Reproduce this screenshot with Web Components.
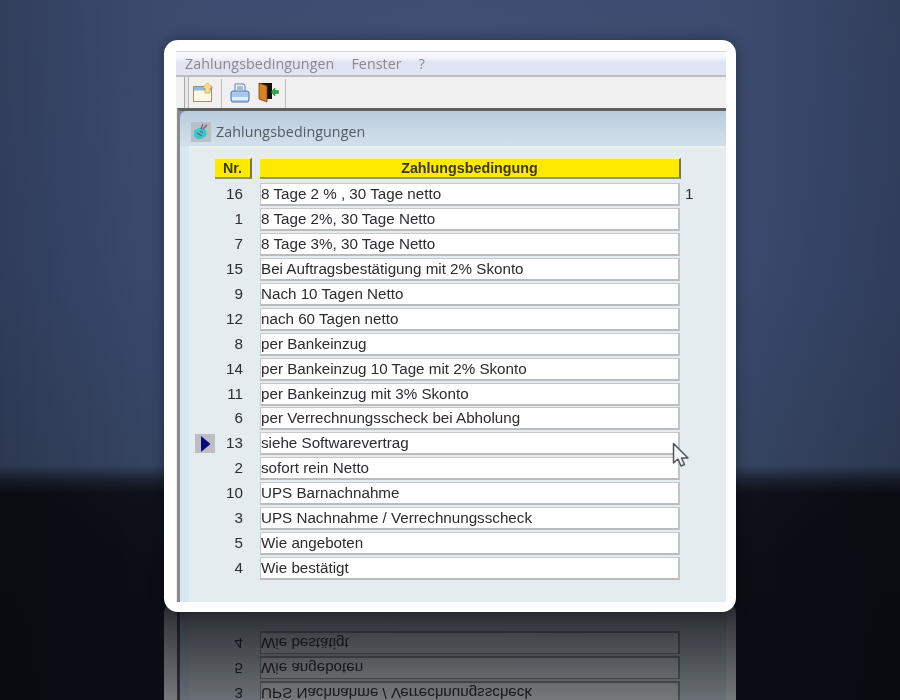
<!DOCTYPE html>
<html lang="de"><head><meta charset="utf-8"><title>Zahlungsbedingungen</title>
<style>html,body{margin:0;padding:0;background:#0a0d14}</style></head>
<body>
<showcase-stage></showcase-stage>
<script>
const DATA=[[16,"8 Tage 2 % , 30 Tage netto"],[1,"8 Tage 2%, 30 Tage Netto"],[7,"8 Tage 3%, 30 Tage Netto"],[15,"Bei Auftragsbestätigung mit 2% Skonto"],[9,"Nach 10 Tagen Netto"],[12,"nach 60 Tagen netto"],[8,"per Bankeinzug"],[14,"per Bankeinzug 10 Tage mit 2% Skonto"],[11,"per Bankeinzug mit 3% Skonto"],[6,"per Verrechnungsscheck bei Abholung"],[13,"siehe Softwarevertrag"],[2,"sofort rein Netto"],[10,"UPS Barnachnahme"],[3,"UPS Nachnahme / Verrechnungsscheck"],[5,"Wie angeboten"],[4,"Wie bestätigt"]];
class El extends HTMLElement{constructor(){super();this.attachShadow({mode:'open'}).innerHTML=this.constructor.html}}
function fillRows(r,list){list.forEach(([n,t])=>{const e=document.createElement('term-row');e.setAttribute('nr',n);e.setAttribute('text',t);if(n==16)e.setAttribute('extra','1');if(n==13)e.setAttribute('current','');r.append(e)})}
class TermRow extends El{static html=`<style>
:host{display:grid;grid-template-columns:20px 28px 17px 420px 24px;height:23px;align-items:center;font:15.2px/20px "Liberation Sans",Arial,sans-serif;color:#2b2b30}
.mark{grid-column:1;width:20px;height:19px;display:none;background:#bdbdc4;align-items:center;justify-content:center}
:host([current]) .mark{display:flex}
.nr{grid-column:2;text-align:right;margin-top:-1px}
.field{grid-column:4;box-sizing:border-box;height:23px;width:420px;background:#fff;border:1px solid var(--field-line,#c8c8c8);border-bottom:2px solid var(--field-line,#bcbcbc);border-right:2px solid var(--field-line,#c4c4c4);white-space:nowrap;overflow:hidden}
.x{grid-column:5;padding-left:5px;margin-top:-1px}
</style><span class="mark"><svg width="11" height="16" viewBox="0 0 11 16"><path d="M1 0L10.500 8L1 16Z" fill="#0b0b78"/></svg></span><span class="nr"></span><span class="field"></span><span class="x"></span>`;
connectedCallback(){const s=this.shadowRoot;s.querySelector('.nr').textContent=this.getAttribute('nr');s.querySelector('.field').textContent=this.getAttribute('text');s.querySelector('.x').textContent=this.getAttribute('extra')||''}}
customElements.define('term-row',TermRow);
class MenuBar extends El{static html=`<style>
:host{display:flex;gap:17px;height:26px;box-sizing:border-box;padding:2px 0 0 9px;background:linear-gradient(#fbfcfe 0,#f3f5fa 25%,#dfe3f3 45%,#e1e4f3 100%);border-top:1px solid #d8d8dc;border-bottom:2px solid #bdbdc2;font:14.25px "Open Sans",sans-serif;color:#8a8a8e;letter-spacing:.08px}
</style><span>Zahlungsbedingungen</span><span>Fenster</span><span>?</span>`}
customElements.define('menu-bar',MenuBar);
class ToolBar extends El{static html=`<style>
:host{display:flex;height:31px;box-sizing:border-box;background:#f0f0f0;align-items:stretch}
.grip{margin-left:8px;width:3px;border-left:1px solid #a8a8a8;border-right:1px solid #b5b5b5;background:#e8e8e8;margin-right:4px}
.ic{display:flex;align-items:center;box-sizing:border-box}
.sep{width:1px;background:#bcbcbc;margin:2px 0 0}
svg{display:block}
</style><span class="grip"></span>
<span class="ic" style="width:28px"><svg width="21" height="20" viewBox="0 0 21 20"><rect x=".5" y="3.500" width="18" height="15" fill="#fdf9e6" stroke="#9a9176"/><rect x="1" y="4" width="17" height="3.500" fill="#8fb8e8"/><path d="M14.500 0l5 5h-2.500v5h-5v-5h-2.500z" fill="#f7dd8e" stroke="#c29a46" stroke-width=".7"/></svg></span><span class="sep"></span>
<span class="ic" style="width:36px;padding-left:8px"><svg width="20" height="20" viewBox="0 0 20 20"><path d="M5 1h9l1 2v6H5z" fill="#f4f7fb" stroke="#5a7fb0"/><path d="M7 4h6M7 6h6" stroke="#5a7fb0"/><path d="M1 10q0-2 2-2h14q2 0 2 2v7q0 2-2 2H3q-2 0-2-2z" fill="#a9c7ea" stroke="#4a78b5"/><rect x="2" y="14" width="16" height="3" fill="#e6eef8"/></svg></span>
<span class="ic" style="width:27px"><svg width="21" height="21" viewBox="0 0 21 21"><rect x="1" y="1" width="13" height="16" fill="#111"/><path d="M1 1l8 3v16l-8-3z" fill="#d9831f" stroke="#7a4310" stroke-width=".8"/><path d="M13 10l4-4v2.500h3.500v3h-3.500v2.500z" fill="#27b03a" stroke="#1a7a28" stroke-width=".5"/></svg></span><span class="sep"></span>`}
customElements.define('tool-bar',ToolBar);
class TermsWindow extends El{static html=`<style>
:host{display:flex;flex-direction:column;flex:1;border-top:3px solid #5f5f5f;border-left:3px solid #8b8b8f;margin-left:1px;background:#e4ecef;min-height:0}
.corner{background:#8686bc;flex:none}
.title{height:35px;box-sizing:border-box;display:flex;align-items:center;gap:5px;padding:6px 0 0 11px;background:linear-gradient(#b9ccdc,#d2e0ec);font:14.25px "Open Sans",sans-serif;color:#555a60;letter-spacing:.08px;border-radius:6px 0 0 0}
.strip{flex:1;display:flex;min-height:0}
.left{width:9px;background:#d7e6f4;flex:none}
.body{flex:1;padding:10px 0 0 6px;border-top:2px solid #eef0ee}
.head{display:grid;grid-template-columns:20px 37px 8px 421px;height:20px;font:700 14.3px "Liberation Sans",Arial,sans-serif;color:#3a3a10;margin-bottom:5px}
.h{grid-row:1;background:#ffe900;text-align:center;line-height:18px;box-sizing:border-box;border-right:2px solid #77725a;border-bottom:2px solid #9a9468;border-top:1px solid #fff6a0}
.rows{display:flex;flex-direction:column;gap:1.95px}
</style><div class="corner"><div class="title"><svg width="20" height="20" viewBox="0 0 20 20"><rect width="20" height="20" fill="#b7c0c6"/><path d="M3 10q3-5 9-4 5 2 3 8-4 4-9 3-4-2-3-7z" fill="#36c7cf"/><path d="M6 11l5 3M9 9l3 2M12 2l-2 5M16 3l-4 4" stroke="#775a70" stroke-width="1.300" fill="none"/></svg><span>Zahlungsbedingungen</span></div></div>
<div class="strip"><div class="left"></div><div class="body"><div class="head"><span class="h" style="grid-column:2">Nr.</span><span class="h" style="grid-column:4">Zahlungsbedingung</span></div><div class="rows"></div></div></div>`;
connectedCallback(){fillRows(this.shadowRoot.querySelector('.rows'),DATA)}}
customElements.define('terms-window',TermsWindow);
class AppCard extends El{static html=`<style>
:host{display:block;box-sizing:border-box;width:572px;height:572px;padding:11px 10px 10px 12px;background:#fff;border-radius:14px}
.app{height:100%;display:flex;flex-direction:column;background:#f0f0f0;filter:blur(.35px)}
</style><div class="app"><menu-bar></menu-bar><tool-bar></tool-bar><terms-window></terms-window></div>`}
customElements.define('app-card',AppCard);
/* the lower slice of the card, mirrored as a floor reflection */
class CardReflection extends El{static html=`<style>
:host{display:block;box-sizing:border-box;width:572px;height:105px;padding:0 10px 10px 12px;background:#fff;border-radius:0 0 14px 14px;transform:scaleY(-1);--field-line:#9c9ca0;filter:blur(.4px)}
.app{height:100%;box-sizing:border-box;margin-left:1px;border-left:3px solid #555;display:flex}
.left{width:9px;background:#d7e6f4;flex:none}
.body{flex:1;background:#e4ecef;padding:1px 0 0 6px}
.rows{display:flex;flex-direction:column;gap:1.95px;color:#000}
</style><div class="app"><div class="left"></div><div class="body"><div class="rows"></div></div></div>`;
connectedCallback(){fillRows(this.shadowRoot.querySelector('.rows'),DATA.slice(13))}}
customElements.define('card-reflection',CardReflection);
class ShowcaseStage extends El{static html=`<style>
:host{display:block;position:relative;width:900px;height:700px;overflow:hidden;
background:radial-gradient(ellipse 560px 460px at 450px 190px,rgba(90,112,160,.3),rgba(70,90,130,.1) 65%,rgba(0,0,0,0) 100%),linear-gradient(90deg,rgba(0,0,0,.16),rgba(0,0,0,0) 18%,rgba(0,0,0,0) 82%,rgba(0,0,0,.16)),linear-gradient(#3a496c 0,#37466a 40%,#34435f 66.5%,#1b2130 68.500%,#0b0e15 70.500%,#0a0d14 100%)}
.front{position:absolute;left:164px;top:40px;box-shadow:0 0 14px rgba(0,0,0,.35);border-radius:14px}
.mirror{position:absolute;left:164px;top:600px;-webkit-mask-image:linear-gradient(rgba(0,0,0,.12),rgba(0,0,0,.46));mask-image:linear-gradient(rgba(0,0,0,.12),rgba(0,0,0,.46))}
svg.cur{position:absolute;left:672px;top:442px}
</style><div class="mirror"><card-reflection></card-reflection></div><app-card class="front"></app-card>
<svg class="cur" width="18" height="27" viewBox="0 0 18 27" style="filter:blur(.35px)"><path d="M1.500 1.500V21L6 17l3 7 3.500-1.500L9.500 16H16Z" fill="#f4f6f6" stroke="#55565c" stroke-width="1.500" stroke-linejoin="round"/></svg>`}
customElements.define('showcase-stage',ShowcaseStage);
</script></body></html>
